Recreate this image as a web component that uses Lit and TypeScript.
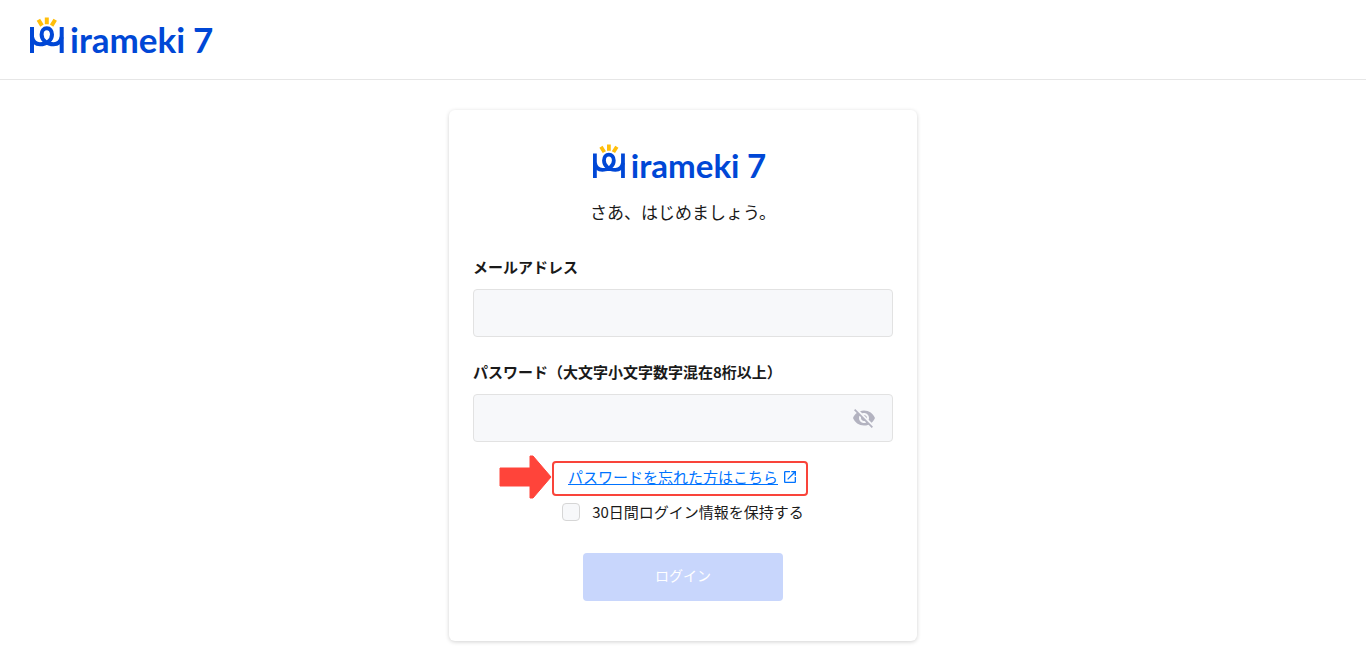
import { LitElement, html, css } from "lit";
import { customElement, state } from "lit/decorators.js";

@customElement("brand-logo")
class BrandLogo extends LitElement {
  static styles = css`
    :host { display: block; }
    .logo { display: block; width: 100%; height: auto; overflow: visible; }
    .word { font: 700 35px Lato, sans-serif; fill: #0047d6; }
    .line { fill: none; stroke: #0047d6; stroke-width: 4; }
    .ray { fill: none; stroke: #ffbe0a; stroke-width: 4; }
  `;
  render() {
    return html`
      <svg class="logo" viewBox="0 0 182 38" role="img" aria-label="Mirameki 7">
        <path class="line" d="M2 10V36 M31.700 10V36" />
        <path class="line" d="M2 20C3 25 6 27.300 10 27.300C16.500 27.300 22 23.500 22 17.500C22 13.800 19.900 11.300 16.800 11.300S11.600 13.800 11.600 17.500C11.600 23.500 17 27.300 23.700 27.300C27.700 27.300 30.700 25 31.700 20" />
        <path class="ray" d="M8.400 2.800L12 8.600 M16.800 0.500V7.200 M25.200 2.800L21.600 8.600" />
        <text class="word" x="40" y="36">irameki</text>
        <text class="word" x="163" y="36">7</text>
      </svg>
    `;
  }
}

@customElement("app-root")
class AppRoot extends LitElement {
  @state() private visible = false;

  static styles = css`
    :host {
      display: block;
      min-height: 100vh;
      background: #fff;
      color: #1a1a1a;
      font-family: "Noto Sans CJK JP", sans-serif;
      font-size: 15px;
      line-height: 20px;
    }
    * { box-sizing: border-box; }
    .header {
      height: 80px;
      padding: 17px 30px;
      border-bottom: 1px solid #e6e6e6;
    }
    .header brand-logo { width: 182px; }
    .main { display: flex; justify-content: center; padding: 30px 16px 28px; }
    .card {
      width: 100%;
      max-width: 468px;
      padding: 34px 24px 40px;
      border-radius: 6px;
      box-shadow: 0 1px 4px rgba(0, 0, 0, 0.18);
      display: flex;
      flex-direction: column;
    }
    .card brand-logo { width: 172px; align-self: center; margin-right: 8px; }
    .lead {
      margin: 20px 0 0;
      font-size: 17px;
      font-weight: 400;
      line-height: 24px;
      text-align: center;
    }
    .field { display: flex; flex-direction: column; gap: 12px; margin-top: 33px; }
    .field + .field { margin-top: 25px; }
    .label { font-weight: 700; }
    .box { display: grid; grid-template-columns: 1fr 48px; align-items: center; }
    .input {
      grid-area: 1 / 1 / 2 / 3;
      width: 100%;
      height: 48px;
      padding: 0 16px;
      border: 1px solid #e2e2e2;
      border-radius: 4px;
      background: #f7f8fa;
      font: inherit;
      color: inherit;
    }
    .eye {
      grid-area: 1 / 2 / 2 / 3;
      padding: 0;
      width: 24px;
      height: 24px;
      margin-left: 7px;
      border: 0;
      background: none;
      fill: #b3b3c0;
    }
    .eye svg { display: block; }
    .forgot { position: relative; align-self: center; margin: 19px 6px 0 0; }
    .link {
      display: flex;
      align-items: center;
      gap: 4px;
      height: 35px;
      padding: 0 8px 2px 14px;
      border: 2px solid #f9443a;
      border-radius: 4px;
      color: #0073ff;
      text-decoration: none;
    }
    .link span { text-decoration: underline; }
    .arrow { position: absolute; right: 100%; top: -6px; }
    .keep {
      display: flex;
      align-items: center;
      align-self: center;
      gap: 12px;
      margin-top: 6px;
    }
    .check {
      appearance: none;
      width: 18px;
      height: 18px;
      margin: 0;
      border: 1px solid #d6d6d6;
      border-radius: 4px;
      background: #f7f8fa;
    }
    .check:checked { background: #0047d6; }
    .submit {
      align-self: center;
      width: 200px;
      height: 48px;
      margin-top: 31px;
      padding: 0 0 4px;
      border: 0;
      border-radius: 4px;
      background: #c8d6fc;
      color: #fff;
      font: inherit;
      font-size: 14px;
    }
  `;

  render() {
    return html`
      <header class="header"><brand-logo></brand-logo></header>
      <main class="main">
        <form class="card">
          <brand-logo></brand-logo>
          <h1 class="lead">さあ、はじめましょう。</h1>
          <div class="field">
            <label class="label" for="email">メールアドレス</label>
            <input class="input" id="email" type="email" />
          </div>
          <div class="field">
            <label class="label" for="password">パスワード（大文字小文字数字混在8桁以上）</label>
            <div class="box">
              <input class="input" id="password" type=${this.visible ? "text" : "password"} />
              <button class="eye" type="button" aria-label="パスワードを表示" @click=${() => (this.visible = !this.visible)}>
                <svg width="24" height="24" viewBox="0 0 24 24">
                  <path d="M12 7c2.76 0 5 2.24 5 5 0 .65-.13 1.26-.36 1.83l2.92 2.92c1.51-1.26 2.7-2.89 3.43-4.75-1.73-4.39-6-7.5-11-7.5-1.4 0-2.74.25-3.98.7l2.16 2.16C10.74 7.13 11.35 7 12 7zM2 4.27l2.28 2.28.46.46C3.08 8.3 1.78 10.02 1 12c1.73 4.39 6 7.5 11 7.5 1.55 0 3.03-.3 4.38-.84l.42.42L19.73 22 21 20.73 3.27 3 2 4.27zM7.53 9.8l1.55 1.55c-.05.21-.08.43-.08.65 0 1.66 1.34 3 3 3 .22 0 .44-.03.65-.08l1.55 1.55c-.67.33-1.41.53-2.2.53-2.76 0-5-2.24-5-5 0-.79.2-1.53.53-2.2zm4.31-.78l3.15 3.15.02-.16c0-1.66-1.34-3-3-3l-.17.01z" />
                </svg>
              </button>
            </div>
          </div>
          <div class="forgot">
            <svg class="arrow" width="53" height="46" viewBox="0 0 53 46" fill="#ff443a" stroke="#ff443a" stroke-linejoin="round" aria-hidden="true">
              <path d="M1 13H31V1H34L52 22L34 43H31V31H1Z" />
            </svg>
            <a class="link" href="#">
              <span>パスワードを忘れた方はこちら</span>
              <svg width="16" height="16" viewBox="0 0 24 24" fill="currentColor" aria-hidden="true">
                <path d="M19 19H5V5h7V3H5c-1.110 0-2 .9-2 2v14c0 1.100.89 2 2 2h14c1.100 0 2-.9 2-2v-7h-2v7zM14 3v2h3.590l-9.830 9.830 1.410 1.410L19 6.410V10h2V3h-7z" />
              </svg>
            </a>
          </div>
          <label class="keep"><input class="check" type="checkbox" />30日間ログイン情報を保持する</label>
          <button class="submit" type="submit" disabled>ログイン</button>
        </form>
      </main>
    `;
  }
}
